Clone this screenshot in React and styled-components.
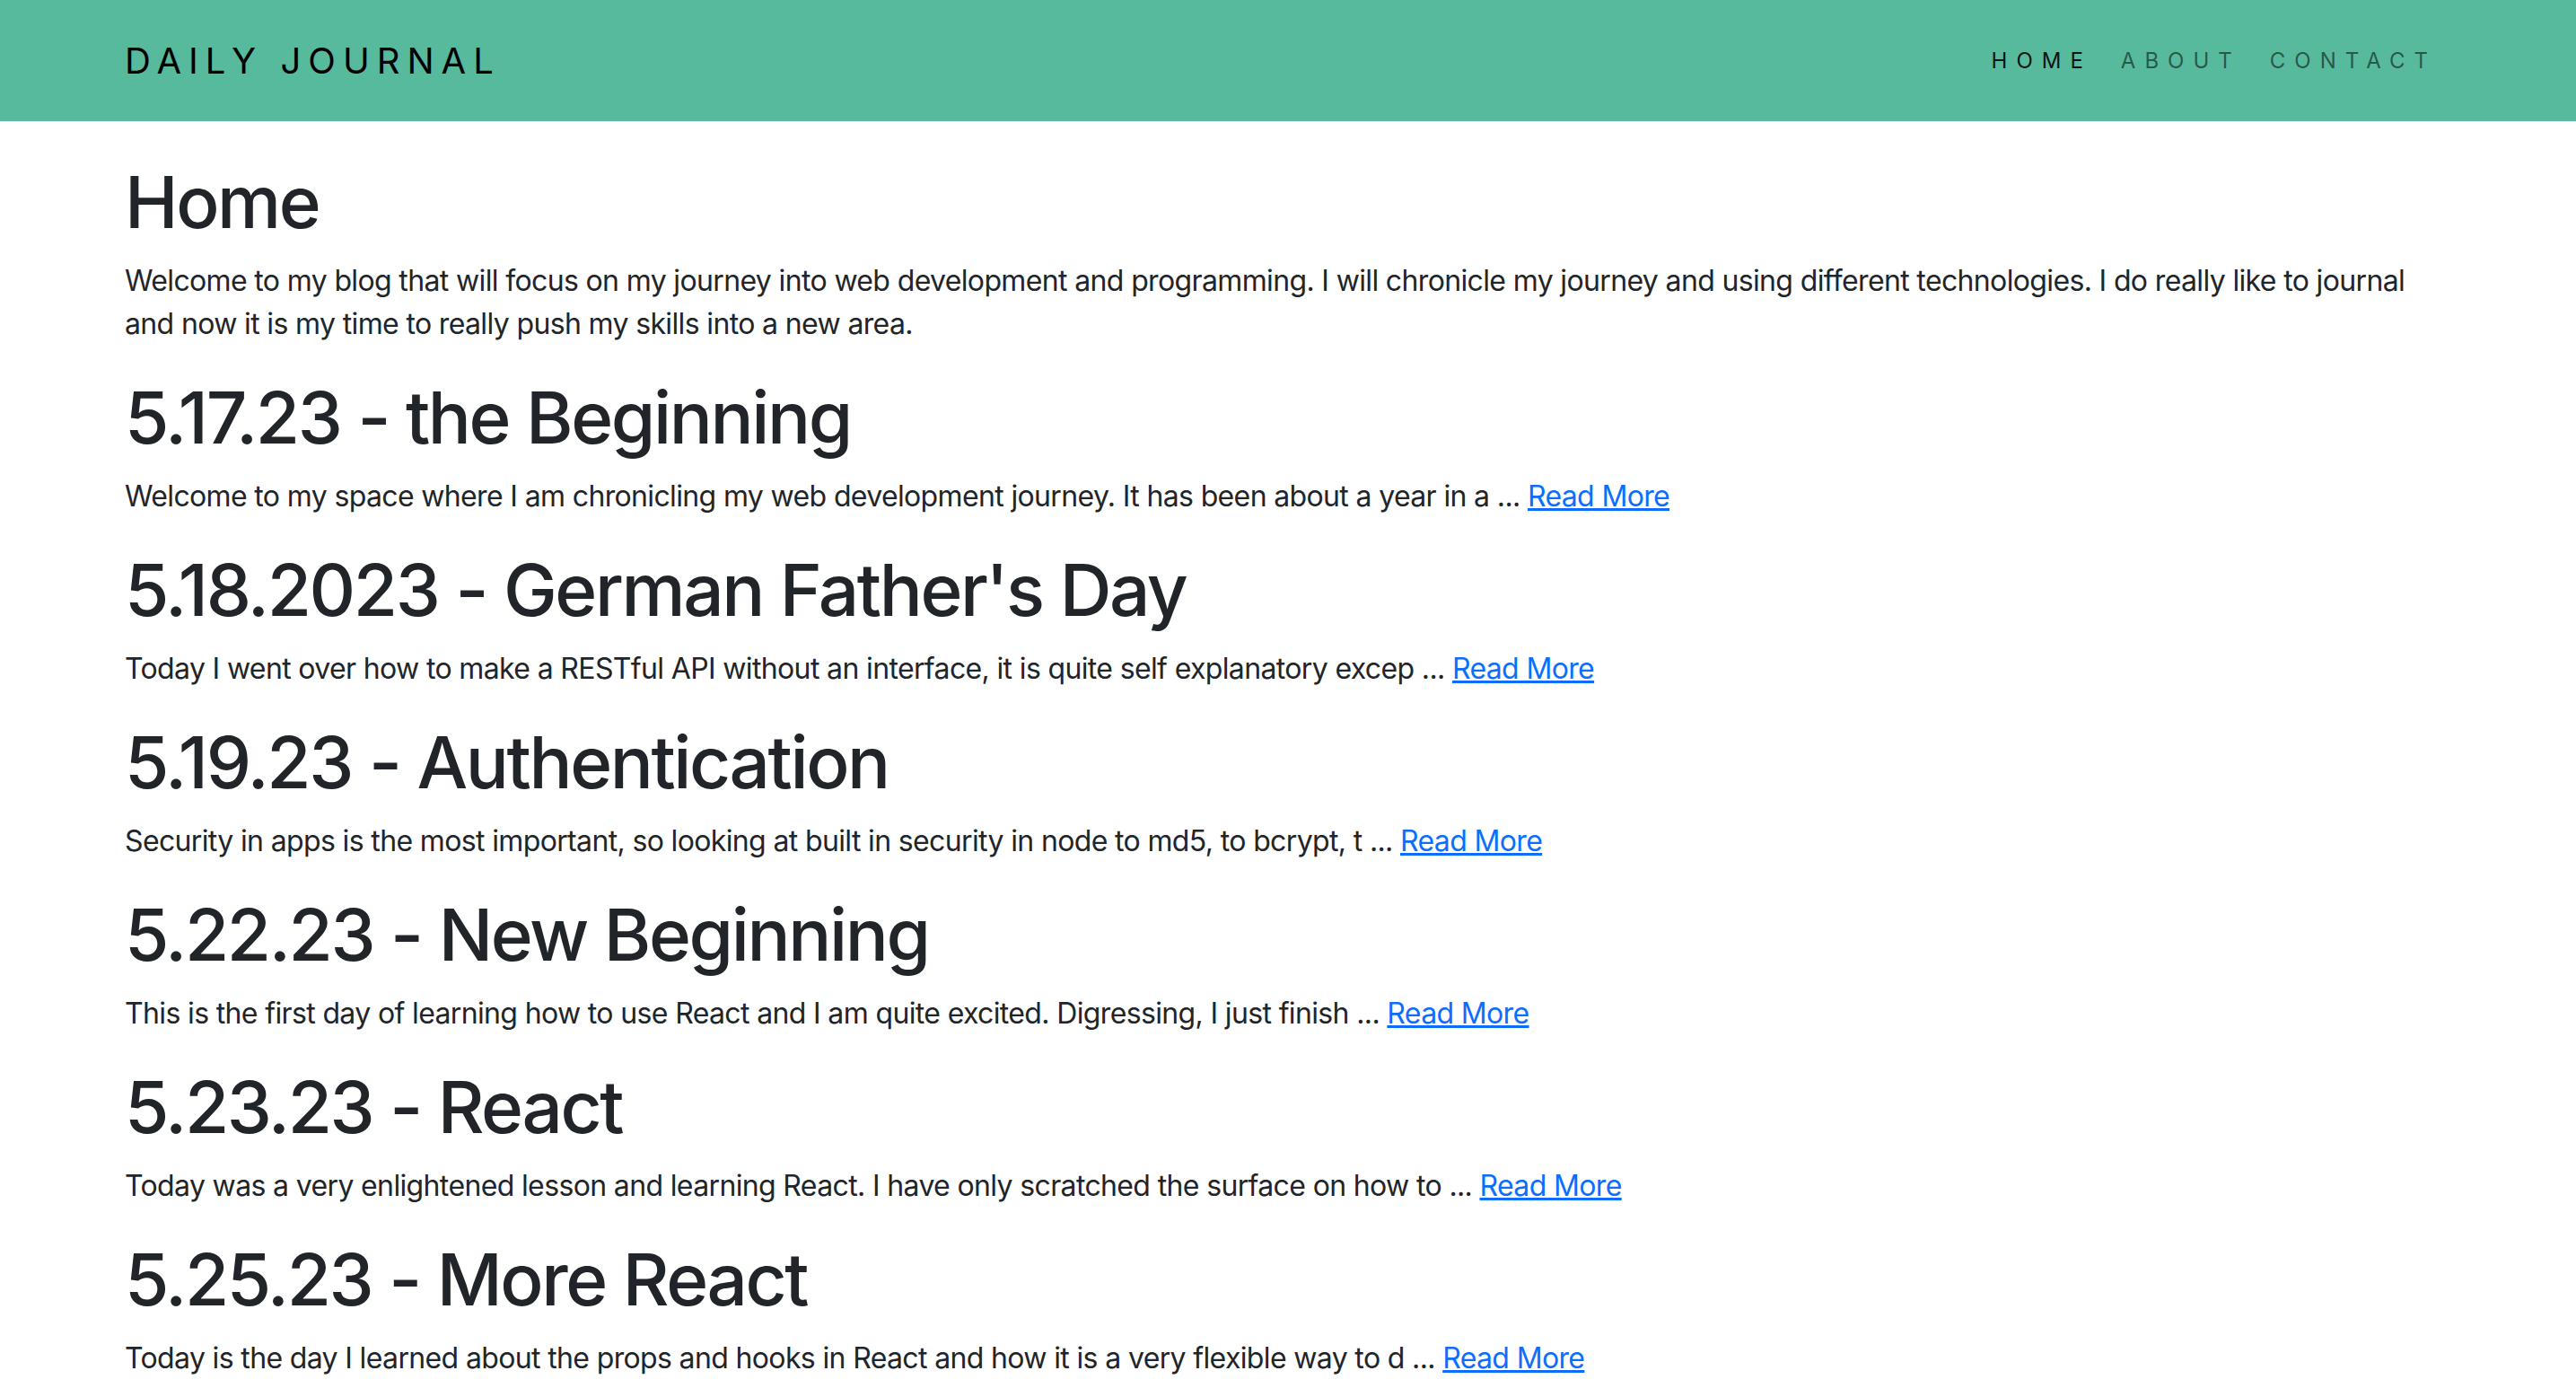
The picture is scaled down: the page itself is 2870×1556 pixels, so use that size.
import styled, { createGlobalStyle } from "styled-components";

const GlobalStyle = createGlobalStyle`
  body {
    margin: 0;
    background: #fff;
    color: #212529;
    font-family: Inter, "Noto Sans", "Liberation Sans", sans-serif;
    font-size: 32px;
    line-height: 1.5;
  }
`;

const Header = styled.header`
  background-color: #58ba9d;
  height: 135px;
`;

const Container = styled.div`
  max-width: 2640px;
  margin: 0 auto;
  padding: 0 24px;
  box-sizing: border-box;
`;

const NavBar = styled(Container)`
  height: 100%;
  display: flex;
  align-items: center;
  justify-content: space-between;
`;

const Brand = styled.a`
  font-size: 40px;
  letter-spacing: 8px;
  color: #000;
  text-decoration: none;
`;

const NavList = styled.ul`
  display: flex;
  list-style: none;
  margin: 0;
  padding: 0;
`;

const NavLink = styled.a`
  display: block;
  padding: 16px;
  font-size: 24px;
  letter-spacing: 10px;
  text-decoration: none;
  color: ${(p) => (p.$active ? "rgba(0, 0, 0, 0.9)" : "rgba(0, 0, 0, 0.55)")};
`;

const Main = styled(Container)`
  padding-top: 42px;
`;

const Title = styled.h1`
  margin: 0 0 16px;
  font-size: 80px;
  font-weight: 500;
  line-height: 1.2;
  letter-spacing: -0.03em;
`;

const Text = styled.p`
  margin: 0 0 32px;
  letter-spacing: -0.02em;
`;

const ReadMore = styled.a`
  color: #0d6efd;
  text-decoration: underline;
`;

const posts = [
  {
    title: "5.17.23 - the Beginning",
    text: "Welcome to my space where I am chronicling my web development journey. It has been about a year in a",
  },
  {
    title: "5.18.2023 - German Father's Day",
    text: "Today I went over how to make a RESTful API without an interface, it is quite self explanatory excep",
  },
  {
    title: "5.19.23 - Authentication",
    text: "Security in apps is the most important, so looking at built in security in node to md5, to bcrypt, t",
  },
  {
    title: "5.22.23 - New Beginning",
    text: "This is the first day of learning how to use React and I am quite excited. Digressing, I just finish",
  },
  {
    title: "5.23.23 - React",
    text: "Today was a very enlightened lesson and learning React. I have only scratched the surface on how to",
  },
  {
    title: "5.25.23 - More React",
    text: "Today is the day I learned about the props and hooks in React and how it is a very flexible way to d",
  },
];

export default function App() {
  return (
    <>
      <GlobalStyle />
      <Header>
        <NavBar>
          <Brand href="#">DAILY JOURNAL</Brand>
          <NavList>
            <li>
              <NavLink href="#" $active>HOME</NavLink>
            </li>
            <li>
              <NavLink href="#">ABOUT</NavLink>
            </li>
            <li>
              <NavLink href="#">CONTACT</NavLink>
            </li>
          </NavList>
        </NavBar>
      </Header>
      <Main>
        <Title>Home</Title>
        <Text>
          Welcome to my blog that will focus on my journey into web development and
          programming. I will chronicle my journey and using different technologies. I do
          really like to journal and now it is my time to really push my skills into a new
          area.
        </Text>
        {posts.map((post) => (
          <div key={post.title}>
            <Title>{post.title}</Title>
            <Text>
              {post.text} ... <ReadMore href="#">Read More</ReadMore>
            </Text>
          </div>
        ))}
      </Main>
    </>
  );
}
